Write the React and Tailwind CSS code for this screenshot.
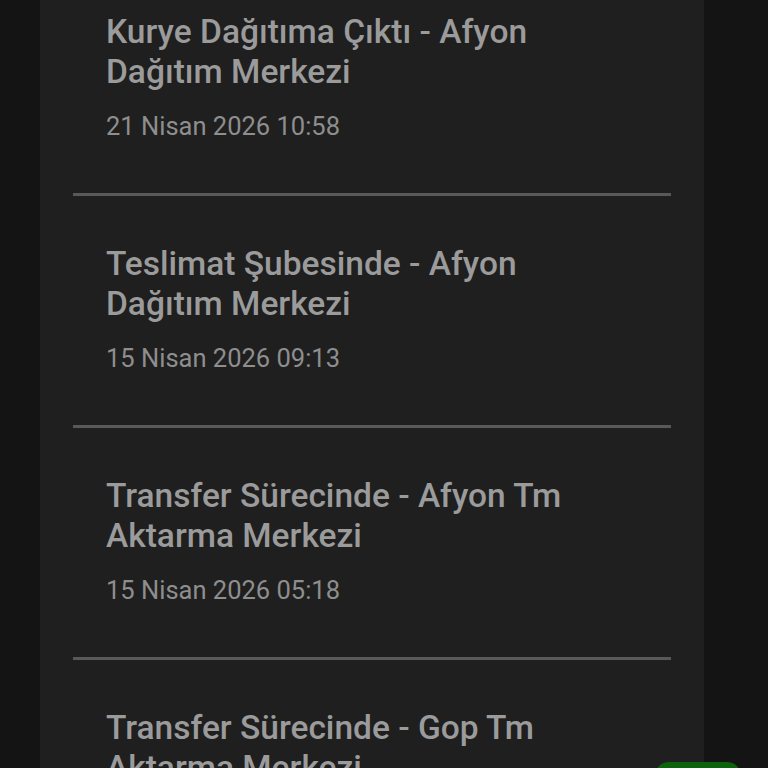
export default function App() {
  const items = [
    { t: "Kurye Dağıtıma Çıktı - Afyon Dağıtım Merkezi", d: "21 Nisan 2026 10:58" },
    { t: "Teslimat Şubesinde - Afyon Dağıtım Merkezi", d: "15 Nisan 2026 09:13" },
    { t: "Transfer Sürecinde - Afyon Tm Aktarma Merkezi", d: "15 Nisan 2026 05:18" },
    { t: "Transfer Sürecinde - Gop Tm Aktarma Merkezi", d: "15 Nisan 2026 05:18" },
  ];
  return (
    <div className="relative w-[768px] h-[768px] overflow-hidden bg-[#141414]" style={{ fontFamily: "Roboto, 'Noto Sans', sans-serif" }}>
      <div className="ml-[40px] w-[664px] h-full bg-[#1f1f1f] overflow-hidden">
        <div className="-mt-[36px] px-[33px]">
          {items.map((it, i) => (
            <div key={i} className="flex flex-col">
              <div className="pt-[48px] pb-[51px] px-[33px]">
                <div className="text-[33.5px] leading-[40px] font-medium text-[#9b9b9b] w-[490px]">{it.t}</div>
                <div className="mt-[18px] text-[25.5px] leading-[32px] text-[#8e8e8e]">{it.d}</div>
              </div>
              <div className="h-[3px] bg-[#595959]" />
            </div>
          ))}
        </div>
      </div>
      <div className="absolute left-[655px] top-[762px] w-[86px] h-[40px] rounded-[14px] bg-[#0b640b]" />
    </div>
  );
}
